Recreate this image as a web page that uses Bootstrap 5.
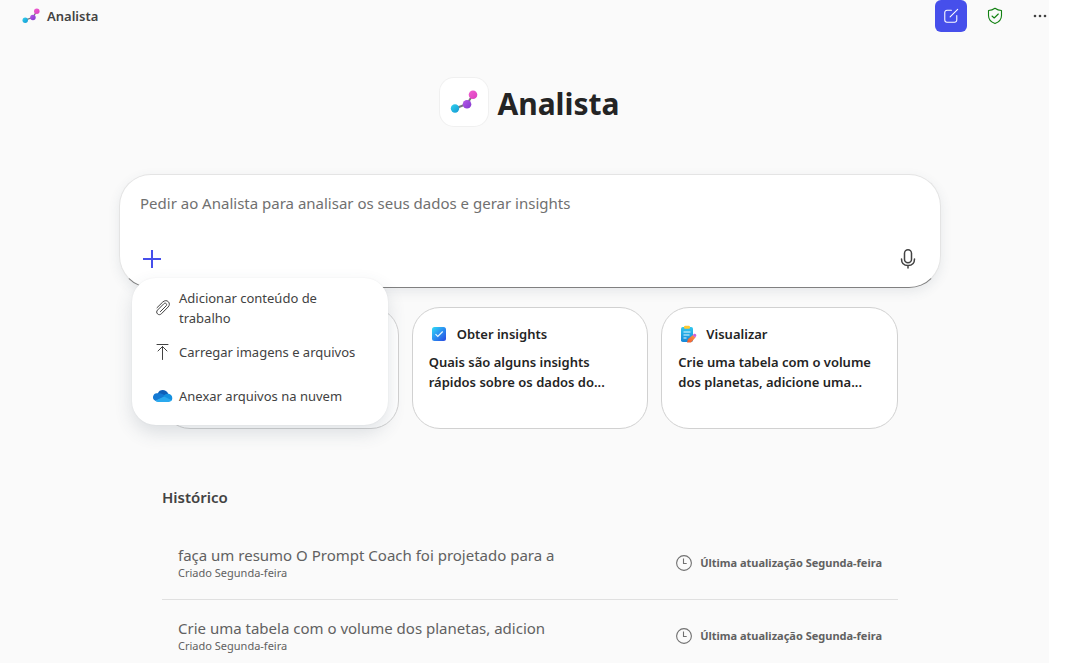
<!DOCTYPE html>
<html lang="pt-BR">
<head>
<meta charset="utf-8">
<meta name="viewport" content="width=device-width, initial-scale=1">
<title>Analista</title>
<link href="https://cdn.jsdelivr.net/npm/bootstrap@5.3.0/dist/css/bootstrap.min.css" rel="stylesheet">
<style>
body { font-family: "Noto Sans", "Open Sans", sans-serif; font-size: 14px; line-height: 20px; color: #242424; background: #fff; }
svg { display: block; flex: none; }
.app { background: #fafafa; margin-right: 27px; }
.topbar { height: 32px; padding-left: 22px; }
.brand { font-size: 13px; font-weight: 600; color: #424242; gap: 7px; }
.icon-btn { width: 32px; height: 32px; padding: 0; border: 0; border-radius: 6px; display: flex; align-items: center; justify-content: center; }
.btn-new, .btn-new:hover { background: #464feb; color: #fff; }
.btn-more { width: 18px; }
.tools { gap: 12px; }
.content { padding-left: 11px; }
.hero { padding-top: 46px; gap: 9px; }
.hero-logo { width: 48px; height: 48px; border-radius: 14px; background: #fff; box-shadow: 0 0 0 1px #f0f0f0; }
.hero h1 { font-size: 30px; line-height: 40px; font-weight: 700; padding-top: 4px; }
.composer { max-width: 822px; height: 114px; margin-top: 48px; padding: 17px 20px 16px; background: #fff; border: 1px solid #e4e4e4; border-bottom-color: #808080; border-radius: 32px; box-shadow: 0 4px 12px rgba(60, 80, 100, .1); }
.composer textarea { border: 0; padding: 0; min-height: 0; font-size: 15px; line-height: 22px; height: 22px; resize: none; background: none; color: #424242; border-radius: 0; }
.composer textarea:focus { box-shadow: none; }
.composer textarea::placeholder { color: #707070; }
.plain-btn { width: 24px; height: 24px; padding: 0; border: 0; }
.attach { display: flex; flex-direction: column; position: absolute; top: 103px; left: 12px; z-index: 5; width: 256px; padding: 8px 21px 7px; background: #fff; border-radius: 24px; box-shadow: 0 8px 18px rgba(60, 80, 100, .16), 0 0 2px rgba(0, 0, 0, .06); }
.attach button { display: flex; align-items: center; gap: 6px; height: 44px; padding: 0; border: 0; background: none; text-align: left; font-size: 13px; line-height: 20px; color: #424242; }
.column { max-width: 736px; }
.suggestions { margin-top: 19px; display: grid; grid-template-columns: repeat(3, 1fr); gap: 13px; }
.suggestion { height: 122px; padding: 16px; border: 1px solid #d1d1d1; border-radius: 28px; background: #fff; text-align: left; font-size: 13px; font-weight: 600; line-height: 20px; color: #242424; display: flex; flex-direction: column; align-items: flex-start; gap: 8px; }
.suggestion .heading { display: flex; align-items: center; gap: 8px; }
.history { margin-top: 58px; }
.history h2 { font-size: 15px; line-height: 20px; font-weight: 600; color: #424242; margin-bottom: 20px; }
.entry { display: flex; align-items: center; justify-content: space-between; height: 73px; padding: 0 16px; border-bottom: 1px solid #e0e0e0; color: #616161; text-decoration: none; }
.entry-name { font-size: 15px; line-height: 20px; }
.entry-made { font-size: 11px; line-height: 16px; }
.entry-date { font-size: 11px; font-weight: 700; display: flex; align-items: center; gap: 8px; }
</style>
</head>
<body>
<svg width="0" height="0" class="position-absolute" aria-hidden="true">
  <defs>
    <linearGradient id="cy" x2="1" y2="1"><stop stop-color="#2fd0ee"/><stop offset="1" stop-color="#1599d2"/></linearGradient>
    <linearGradient id="pu" x2="1" y2="1"><stop stop-color="#b55ae6"/><stop offset="1" stop-color="#8338cf"/></linearGradient>
    <linearGradient id="pk" x2="1" y2="1"><stop stop-color="#f05fd0"/><stop offset="1" stop-color="#db3fc0"/></linearGradient>
    <linearGradient id="bl" x2="1" y2="1"><stop stop-color="#30dcf5"/><stop offset=".45" stop-color="#2b96f2"/><stop offset="1" stop-color="#2a48e0"/></linearGradient>
    <linearGradient id="cl" x2="0" y2="1"><stop stop-color="#32c7ee"/><stop offset="1" stop-color="#1687d8"/></linearGradient>
    <linearGradient id="or" x1="1" x2="0" y2="1"><stop stop-color="#ff9b4a"/><stop offset="1" stop-color="#f0562b"/></linearGradient>
    <symbol id="logo" viewBox="0 0 28 24">
      <path d="M5 18.500 17 14l6-9.500" fill="none" stroke="#77777c" stroke-width="2"/>
      <circle cx="5" cy="18.500" r="4.200" fill="url(#cy)"/><circle cx="17" cy="14.300" r="4.300" fill="url(#pu)"/><circle cx="23" cy="4.700" r="4.300" fill="url(#pk)"/>
    </symbol>
    <symbol id="clock" viewBox="0 0 16 16"><circle cx="8" cy="8" r="7.400" fill="none" stroke="#707070" stroke-width="1.100"/><path d="M7.500 3.500v5h3.200" fill="none" stroke="#707070" stroke-width="1.100"/></symbol>
  </defs>
</svg>
<div class="app vh-100 overflow-hidden">
  <header class="topbar d-flex align-items-center justify-content-between">
    <div class="brand d-flex align-items-center">
      <svg width="18" height="16"><use href="#logo"/></svg><span>Analista</span>
    </div>
    <div class="tools d-flex">
      <button class="btn icon-btn btn-new" aria-label="Novo chat"><svg width="16" height="16" viewBox="0 0 18 18" fill="none" stroke="currentColor" stroke-width="1.200" stroke-linecap="round"><path d="M9.500 2.500H4.500a2.500 2.500 0 0 0-2.500 2.500v8.500A2.500 2.500 0 0 0 4.500 16H13a2.500 2.500 0 0 0 2.500-2.500V8.500M8 10l8.500-8.500"/></svg></button>
      <button class="btn icon-btn me-2" aria-label="Protegido"><svg width="16" height="18" viewBox="0 0 16 18" fill="none" stroke="#118011" stroke-width="1.100" stroke-linecap="round" stroke-linejoin="round"><path d="M8 1.200c2 1.500 4 2.200 6.500 2.300v5c0 3.800-2.300 6.500-6.500 8.100-4.200-1.600-6.500-4.300-6.500-8.100v-5C4 3.400 6 2.700 8 1.200ZM5 9l2.200 2L11.300 7"/></svg></button>
      <button class="btn icon-btn btn-more" aria-label="Mais opções"><svg width="14" height="4" fill="#424242"><circle cx="2" cy="2" r="1.300"/><circle cx="7" cy="2" r="1.300"/><circle cx="12" cy="2" r="1.300"/></svg></button>
    </div>
  </header>
  <main class="content">
    <div class="hero d-flex justify-content-center align-items-center">
      <div class="hero-logo d-flex align-items-center justify-content-center"><svg width="28" height="24"><use href="#logo"/></svg></div>
      <h1 class="mb-0">Analista</h1>
    </div>
    <form class="composer mx-auto position-relative d-flex flex-column justify-content-between">
      <textarea class="form-control" rows="1" aria-label="Mensagem" placeholder="Pedir ao Analista para analisar os seus dados e gerar insights"></textarea>
      <div class="d-flex justify-content-between">
        <button type="button" class="btn plain-btn" aria-label="Adicionar" aria-expanded="true"><svg width="24" height="24" fill="none" stroke="#464feb" stroke-width="2"><path d="M12 3v18M3 12h18"/></svg></button>
        <button type="button" class="btn plain-btn" aria-label="Ditar"><svg width="24" height="24" fill="none" stroke="#424242" stroke-width="1.500" stroke-linecap="round"><rect x="8.500" y="2.700" width="7" height="13" rx="3.500"/><path d="M5.500 12c0 4 2.500 6.500 6.500 6.500s6.500-2.500 6.500-6.500M12 18.500V21"/></svg></button>
      </div>
      <div class="attach">
        <button type="button"><svg width="20" height="20" viewBox="0 0 20 20" fill="none" stroke="#424242" stroke-width="1" stroke-linecap="round"><path d="M4 9.700 9.700 4.100c2-1.900 4.200-1.800 5.600-.4s1.500 3.600-.2 5.300l-6.600 6.700c-1.200 1.200-2.900 1.300-4 .2s-1.100-2.700.1-3.900l6.300-6.300c.7-.7 1.700-.7 2.300-.1s.6 1.600-.1 2.300L7.400 13.600"/></svg><span>Adicionar conteúdo de<br>trabalho</span></button>
        <button type="button"><svg width="20" height="20" fill="none" stroke="#424242" stroke-width="1" stroke-linecap="round"><path d="M4 2.500h11M9.500 17.500v-13M5 9l4.500-4.500L14 9"/></svg><span>Carregar imagens e arquivos</span></button>
        <button type="button"><svg width="20" height="20"><path d="M4.800 7.500C6.200 3.200 13 2.700 15.200 7.800L15 12H6Z" fill="#0f5fb8"/><path d="M4.800 7.300c2.300-.5 4 .2 5.500 1.200l3 2L2.700 15A4 4 0 0 1 4.800 7.300Z" fill="#1479d3"/><path d="M10.500 10c1.300-1.700 3-2.400 4.700-2.200 4 .2 5 4.700 3.300 6.700l-3 1Z" fill="#1490df"/><path d="m2.300 14.700 8.700-4.200 7.800 3.700a4 4 0 0 1-3.300 1.800H5a4 4 0 0 1-2.700-1.300Z" fill="#2ba9ee"/></svg><span>Anexar arquivos na nuvem</span></button>
      </div>
    </form>
    <div class="column mx-auto">
      <div class="suggestions">
        <div class="suggestion"></div>
        <button class="suggestion">
          <span class="heading"><svg width="20" height="20"><rect x="3" y="3" width="14" height="14" rx="2.500" fill="url(#bl)"/><path d="m6.500 10.200 2.300 2.300 4.900-5" fill="none" stroke="#e8f8ff" stroke-width="1.200"/></svg>Obter insights</span>
          <span>Quais são alguns insights<br>rápidos sobre os dados do...</span>
        </button>
        <button class="suggestion">
          <span class="heading"><svg width="20" height="20"><rect x="3" y="3" width="12" height="15" rx="1.800" fill="url(#cl)"/><rect x="6" y="1.800" width="6" height="3" rx="1.200" fill="#ffc933"/><path d="M5.500 8h7M5.500 11h6M5.500 14h3" stroke="#e6faff" stroke-width="1.100"/><path d="m9 18.500 1-3.500 5-4 2.500 2.500-4.500 5Z" fill="url(#or)"/><path d="m14.700 11.200 1-1.100c1.500-1 3.200.6 2.500 2l-1 1.300Z" fill="#cf60d8"/></svg>Visualizar</span>
          <span>Crie uma tabela com o volume<br>dos planetas, adicione uma...</span>
        </button>
      </div>
      <section class="history">
        <h2>Histórico</h2>
        <a href="#" class="entry"><div><div class="entry-name">faça um resumo O Prompt Coach foi projetado para a</div><div class="entry-made">Criado Segunda-feira</div></div><div class="entry-date"><svg width="16" height="16"><use href="#clock"/></svg>Última atualização Segunda-feira</div></a>
        <a href="#" class="entry"><div><div class="entry-name">Crie uma tabela com o volume dos planetas, adicion</div><div class="entry-made">Criado Segunda-feira</div></div><div class="entry-date"><svg width="16" height="16"><use href="#clock"/></svg>Última atualização Segunda-feira</div></a>
      </section>
    </div>
  </main>
</div>
<script src="https://cdn.jsdelivr.net/npm/bootstrap@5.3.0/dist/js/bootstrap.bundle.min.js"></script>
</body>
</html>
